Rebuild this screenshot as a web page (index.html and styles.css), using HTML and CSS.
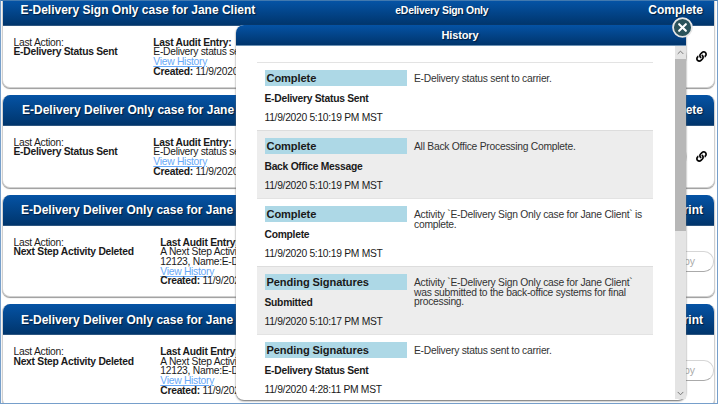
FILE: index.html
```html
<!DOCTYPE html>
<html lang="en">
<head>
<meta charset="utf-8">
<title>Case History</title>
<link rel="stylesheet" href="styles.css">
</head>
<body>
<svg class="defs" width="0" height="0"><symbol id="link" viewBox="0 0 512 512"><path d="M326.6 185.4c59.700 59.800 58.900 155.700.4 214.600l-67.400 67.400c-59.300 59.300-155.700 59.300-215 0s-59.300-155.700 0-215l37.200-37.200c9.900-9.900 26.900-3.300 27.400 10.600.6 17.800 3.800 35.700 9.700 53 2 5.900.6 12.300-3.800 16.700L102 308.600c-28.100 28.100-29 73.900-1.200 102.300s74.300 28.500 102.600.2l67.400-67.400c28.300-28.300 28.200-74 0-102.200-3.700-3.700-7.500-6.600-10.400-8.600-4.200-2.900-6.800-7.500-7-12.600-.4-10.600 3.400-21.500 11.700-29.900l21.100-21.100c5.500-5.500 14.200-6.200 20.600-1.700 7.100 4.900 13.700 10.400 19.800 16.500zM467.500 44.500c-59.300-59.300-155.700-59.300-215 0L185 112c-58.500 58.900-59.400 154.800.4 214.600 6.100 6.100 12.800 11.600 19.900 16.600 6.400 4.500 15.100 3.800 20.600-1.700l21.100-21.100c8.400-8.400 12.100-19.300 11.700-29.900-.2-5.100-2.800-9.700-7-12.600-2.900-2-6.700-4.900-10.400-8.600-28.200-28.200-28.300-73.900 0-102.200l67.400-67.400c28.300-28.300 74.400-28.200 102.600.2s26.800 74.200-1.200 102.300l-15.200 15.200c-4.400 4.400-5.800 10.800-3.800 16.700 5.900 17.300 9.100 35.200 9.700 53 .5 13.900 17.500 20.500 27.400 10.600l37.200-37.200c59.400-59.300 59.400-155.700.1-215z"/></symbol></svg>
<div class="page">
  <section class="card first">
    <header class="card-head"><h2>E-Delivery Sign Only case for Jane Client</h2><span class="kind">eDelivery Sign Only</span><b>Complete</b></header>
    <div class="card-body">
      <div class="last">Last Action:<br><b>E-Delivery Status Sent</b></div>
      <div class="audit"><b>Last Audit Entry:</b><br>E-Delivery status se<br><a>View History</a><br><b>Created:</b> 11/9/2020</div>
      <div class="actions"><span class="btn"></span><svg class="link"><use href="#link"/></svg></div>
    </div>
  </section>
  <section class="card second">
    <header class="card-head"><h2>E-Delivery Deliver Only case for Jane Client</h2><b>Complete</b></header>
    <div class="card-body">
      <div class="last">Last Action:<br><b>E-Delivery Status Sent</b></div>
      <div class="audit"><b>Last Audit Entry:</b><br>E-Delivery status se<br><a>View History</a><br><b>Created:</b> 11/9/2020</div>
      <div class="actions"><span class="btn"></span><svg class="link"><use href="#link"/></svg></div>
    </div>
  </section>
  <section class="card tall">
    <header class="card-head"><h2>E-Delivery Deliver Only case for Jane Client</h2><b>Print</b></header>
    <div class="card-body">
      <div class="last">Last Action:<br><b>Next Step Activity Deleted</b></div>
      <div class="audit"><b>Last Audit Entry:</b><br>A Next Step Activity<br>12123, Name:E-D<br><a>View History</a><br><b>Created:</b> 11/9/2020</div>
      <div class="actions"><span class="btn copy">Copy</span></div>
    </div>
  </section>
  <section class="card tall">
    <header class="card-head"><h2>E-Delivery Deliver Only case for Jane Client</h2><b>Print</b></header>
    <div class="card-body">
      <div class="last">Last Action:<br><b>Next Step Activity Deleted</b></div>
      <div class="audit"><b>Last Audit Entry:</b><br>A Next Step Activity<br>12123, Name:E-D<br><a>View History</a><br><b>Created:</b> 11/9/2020</div>
      <div class="actions"><span class="btn copy">Copy</span></div>
    </div>
  </section>

  <div class="modal">
    <div class="modal-head">History</div>
    <div class="modal-main">
      <div class="entries">
        <article class="entry"><div class="event"><h3>Complete</h3><b>E-Delivery Status Sent</b><time>11/9/2020 5:10:19 PM MST</time></div><p>E-Delivery status sent to carrier.</p></article>
        <article class="entry shade"><div class="event"><h3>Complete</h3><b>Back Office Message</b><time>11/9/2020 5:10:19 PM MST</time></div><p>All Back Office Processing Complete.</p></article>
        <article class="entry"><div class="event"><h3>Complete</h3><b>Complete</b><time>11/9/2020 5:10:19 PM MST</time></div><p>Activity `E-Delivery Sign Only case for Jane Client` is<br>complete.</p></article>
        <article class="entry shade"><div class="event"><h3>Pending Signatures</h3><b>Submitted</b><time>11/9/2020 5:10:17 PM MST</time></div><p>Activity `E-Delivery Sign Only case for Jane Client`<br>was submitted to the back-office systems for final<br>processing.</p></article>
        <article class="entry"><div class="event"><h3>Pending Signatures</h3><b>E-Delivery Status Sent</b><time>11/9/2020 4:28:11 PM MST</time></div><p>E-Delivery status sent to carrier.</p></article>
      </div>
      <div class="scrollbar">
        <svg viewBox="0 0 11 12"><path d="M2.700 7.700 5.500 4.900 8.300 7.700"/></svg>
        <div class="thumb"></div>
        <svg viewBox="0 0 11 12"><path d="M2.700 4.700 5.500 7.500 8.300 4.700"/></svg>
      </div>
    </div>
    <svg class="close" viewBox="0 0 20 20"><circle cx="10" cy="10" r="9"/><path d="M6.800 6.800 13.200 13.200M13.200 6.800 6.800 13.200"/></svg>
  </div>
</div>
</body>
</html>
```
FILE: styles.css
```css
* { box-sizing: border-box; }
body { margin: 0; overflow: hidden; font: 10.300px/9.700px "Liberation Sans", Arial, sans-serif; letter-spacing: -.270px; color: #1a1a1a; }
h2, h3, p { margin: 0; }
.defs { display: block; }
.page { position: relative; width: 718px; height: 404px; overflow: hidden; background: #fff; border: 1px solid #769fcb; border-top-color: #4279af; padding: 0 1px; display: flex; flex-direction: column; gap: 7px; }
.card { flex: none; width: 713px; height: 102.500px; border-radius: 8px; background: #fff; border: 1px solid #d0d0d0; border-top: 0; box-shadow: 0 1px 1px #999; overflow: hidden; }
.card.first { height: 86.500px; border-radius: 0 0 8px 8px; }
.card.second { height: 93px; }
.card-head { height: 31px; margin: 0 -1px; display: flex; align-items: center; justify-content: space-between; padding: 1px 12px 0 19px; background: linear-gradient(#0553a5, #00356c); border-bottom: 1px solid #2c5580; color: #fff; font-size: 12px; line-height: 14px; letter-spacing: 0; text-shadow: 1px 1px 1px #001c3c; white-space: nowrap; }
.first .card-head { height: 24.500px; padding: 0 12px 5px 18.500px; }
.second .card-head { padding-left: 20px; }
h2 { font-size: 12px; }
.kind { font-size: 10.400px; letter-spacing: -.250px; font-weight: bold; padding-top: 2px; }
.first .kind { margin-right: 20px; }
.card-body { display: flex; padding: 12px 0 0 10.500px; white-space: nowrap; }
.last { width: 141.300px; }
.audit { width: 478.700px; }
.tall .last { width: 146.800px; }
.tall .audit { width: 473.200px; }
a { color: #67a8f8; text-decoration: underline; }
.actions { flex: 1; display: flex; align-items: center; justify-content: flex-end; height: 37px; padding-right: 7px; gap: 9px; }
.btn { width: 60px; height: 21px; border: 1px solid #d6d6d6; border-bottom: 1.500px solid #aaa; border-radius: 10px; flex: none; }
.tall .actions { align-items: flex-start; padding: 13px 0 0; }
.copy { color: #aaa; font-size: 10.500px; line-height: 19px; letter-spacing: 0; text-align: right; padding-right: 18px; }
.link { width: 11px; height: 11px; fill: #050505; flex: none; }
.modal { position: absolute; left: 235px; top: 24px; width: 450px; height: 374.500px; border-radius: 8px; background: #fff; box-shadow: 0 1px 2px #666; }
.modal-head { height: 21px; border-radius: 8px 0 0; border-bottom: 1px solid #6b91b4; background: linear-gradient(#0553a5, #00356c); color: #fff; text-align: center; font-weight: bold; font-size: 11px; letter-spacing: -.150px; line-height: 21px; text-shadow: 1px 1px 1px #001c3c; padding-right: 2px; }
.modal-main { height: 353px; display: flex; justify-content: space-between; }
.entries { margin: 16px 0 0 21px; width: 396px; }
.entry { height: 68px; display: flex; gap: 7px; padding: 7px 7px 0 7.500px; border-top: 1px solid #e3e3e3; }
.shade { background: #ededed; border-color: #ddd; }
.event { width: 142.500px; display: flex; flex-direction: column; }
h3 { height: 16px; background: #add8e6; font-size: 11.100px; letter-spacing: -.100px; line-height: 17px; padding-left: 2px; }
.event b { margin-top: 8px; }
time { margin-top: 9.500px; letter-spacing: -.300px; }
.entry p { padding-top: 4px; white-space: nowrap; letter-spacing: -.245px; color: #333; }
.scrollbar { width: 11.500px; background: #e4e4e4; display: flex; flex-direction: column; }
.scrollbar svg { width: 11px; height: 12.500px; fill: none; stroke: #777; stroke-width: 1; }
.thumb { height: 172px; background: #b7b7b7; margin-bottom: auto; }
.close { position: absolute; left: 436px; top: -8.500px; width: 21px; height: 21px; }
.close circle { fill: #2b535b; stroke: #e6e6e6; stroke-width: 1.700; }
.close path { stroke: #fff; stroke-width: 2; stroke-linecap: round; }
```
